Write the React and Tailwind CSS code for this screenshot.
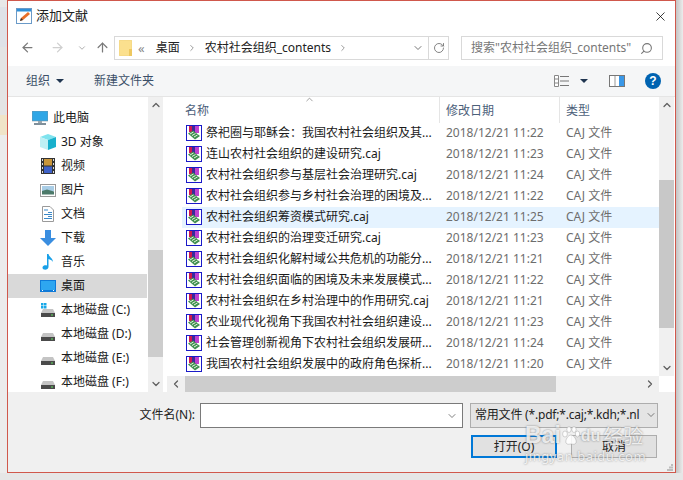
import { ChevronUp, ChevronDown, ChevronLeft, ChevronRight, ArrowLeft, ArrowRight, ArrowUp, RotateCw, Search, X } from "lucide-react";

const files = [
  ["祭祀圈与耶稣会：我国农村社会组织及其...", "2018/12/21 11:22"],
  ["连山农村社会组织的建设研究.caj", "2018/12/21 11:23"],
  ["农村社会组织参与基层社会治理研究.caj", "2018/12/21 11:24"],
  ["农村社会组织参与乡村社会治理的困境及...", "2018/12/21 11:22"],
  ["农村社会组织筹资模式研究.caj", "2018/12/21 11:25"],
  ["农村社会组织的治理变迁研究.caj", "2018/12/21 11:23"],
  ["农村社会组织化解村域公共危机的功能分...", "2018/12/21 11:21"],
  ["农村社会组织面临的困境及未来发展模式...", "2018/12/21 11:22"],
  ["农村社会组织在乡村治理中的作用研究.caj", "2018/12/21 11:21"],
  ["农业现代化视角下我国农村社会组织建设...", "2018/12/21 11:23"],
  ["社会管理创新视角下农村社会组织发展研...", "2018/12/21 11:24"],
  ["我国农村社会组织发展中的政府角色探析...", "2018/12/21 11:20"],
];

function CajIcon() {
  return (
    <svg width="16" height="16" viewBox="0 0 16 16" className="shrink-0">
      <rect x="0.5" y="0.5" width="15" height="15" fill="#fff" stroke="#1a1ac8" />
      <rect x="3" y="1" width="3" height="6" fill="#d01850" />
      <rect x="6" y="1" width="3" height="6" fill="#3a2a9a" />
      <rect x="9" y="1" width="4" height="7" fill="#c040d0" />
      <path d="M2 8.5 L7 5.5 L14 11 L9 14.5 Z" fill="#3f8f4f" />
      <path d="M4 9 L7.5 7 M6 10.5 L9.5 8.5 M8 12 L11.5 10" stroke="#e8f5e0" strokeWidth="1" />
    </svg>
  );
}

function PcIcon() {
  return (
    <svg width="16" height="15" viewBox="0 0 16 15">
      <rect x="0" y="0" width="16" height="10" fill="#2ea6e6" stroke="#7f8f9a" strokeWidth="0.6" />
      <rect x="6" y="10" width="4" height="2" fill="#9aa6ae" />
      <rect x="2" y="12" width="12" height="2" fill="#7f8f9a" />
    </svg>
  );
}

function CubeIcon() {
  return (
    <svg width="16" height="16" viewBox="0 0 16 16">
      <path d="M8 0 L16 3 L8 6 L0 3 Z" fill="#7fe3ee" />
      <path d="M0 3 L8 6 L8 16 L0 13 Z" fill="#bff0f4" />
      <path d="M16 3 L8 6 L8 16 L16 13 Z" fill="#18b0cc" />
    </svg>
  );
}

function VideoIcon() {
  return (
    <svg width="14" height="16" viewBox="0 0 14 16">
      <rect width="14" height="16" fill="#333" />
      <rect x="3" y="1" width="8" height="6.5" fill="#c9963a" />
      <rect x="3" y="8.5" width="8" height="6.5" fill="#3f62c8" />
      <path d="M1 1h1v2H1zM1 5h1v2H1zM1 9h1v2H1zM1 13h1v2H1zM12 1h1v2h-1zM12 5h1v2h-1zM12 9h1v2h-1zM12 13h1v2h-1z" fill="#ddd" />
    </svg>
  );
}

function PictureIcon() {
  return (
    <svg width="16" height="13" viewBox="0 0 16 13">
      <rect x="0.5" y="0.5" width="15" height="12" fill="#fff" stroke="#9a9a9a" />
      <rect x="2" y="2" width="12" height="5" fill="#a9cde6" />
      <path d="M2 7 L7 5.5 L14 7.5 V10.5 H2 Z" fill="#4c7a6a" />
    </svg>
  );
}

function DocIcon() {
  return (
    <svg width="12" height="16" viewBox="0 0 12 16">
      <path d="M0.5 0.5 H8 L11.5 4 V15.5 H0.5 Z" fill="#fff" stroke="#9a9a9a" />
      <path d="M2 4h4M6 6.5h4M2 8.5h8M6 10.5h4M2 12.5h8" stroke="#3a88c8" />
    </svg>
  );
}

function DownloadIcon() {
  return (
    <svg width="16" height="16" viewBox="0 0 16 16">
      <path d="M5 0 H11 V8 H16 L8 16 L0 8 H5 Z" fill="#3a8ee0" />
    </svg>
  );
}

function MusicIcon() {
  return (
    <svg width="12" height="16" viewBox="0 0 12 16">
      <path d="M5 0 H6.5 C7 3 11 4 11 8 C10 6 8 5.5 6.5 5 V13 C6.5 15 4 16 2 15.5 C0 15 0 12.5 2 11.5 C3 11 4 11 5 11.5 Z" fill="#18a0e8" />
    </svg>
  );
}

function DesktopIcon() {
  return (
    <svg width="16" height="12" viewBox="0 0 16 12">
      <rect width="16" height="12" fill="#0f7ad8" />
      <rect x="1" y="1" width="14" height="9" fill="#2ea6f0" />
      <path d="M2 10.5h1M13 10.5h1" stroke="#fff" />
    </svg>
  );
}

function DiskIcon({ win }) {
  return (
    <svg width="14" height="14" viewBox="0 0 14 14">
      {win && <path d="M0 0h2.5v2.5H0zM3 0h2.5v2.5H3zM0 3h2.5v2.5H0zM3 3h2.5v2.5H3z" fill="#18a8e8" />}
      <path d="M2 6 H12 L14 10 H0 Z" fill="#c4c4c4" />
      <rect y="10" width="14" height="4" fill="#4a4a4a" />
      <rect x="10" y="11.5" width="2" height="1" fill="#5fe05f" />
    </svg>
  );
}

const places = [
  { label: "3D 对象", icon: <CubeIcon /> },
  { label: "视频", icon: <VideoIcon /> },
  { label: "图片", icon: <PictureIcon /> },
  { label: "文档", icon: <DocIcon /> },
  { label: "下载", icon: <DownloadIcon /> },
  { label: "音乐", icon: <MusicIcon /> },
  { label: "桌面", icon: <DesktopIcon />, active: true },
  { label: "本地磁盘 (C:)", icon: <DiskIcon win /> },
  { label: "本地磁盘 (D:)", icon: <DiskIcon /> },
  { label: "本地磁盘 (E:)", icon: <DiskIcon /> },
  { label: "本地磁盘 (F:)", icon: <DiskIcon /> },
];

function Sidebar() {
  return (
    <div className="w-[140px] h-full overflow-hidden pt-[9px] bg-white">
      <div className="h-6 flex items-center pl-6 gap-[5px] text-[#1a1a1a]">
        <PcIcon />
        <span>此电脑</span>
      </div>
      {places.map((p) => (
        <div
          key={p.label}
          className={`h-6 flex items-center w-[139px] text-[#1a1a1a] ${p.active ? "bg-[#d9d9d9]" : ""}`}
        >
          <span className="w-[53px] pl-8 pr-[5px] flex justify-center shrink-0">{p.icon}</span>
          <span className="whitespace-nowrap">{p.label}</span>
        </div>
      ))}
    </div>
  );
}

function FileList() {
  return (
    <div className="w-[492px] h-[279px] overflow-hidden bg-white">
      <div className="h-[26px] flex text-[#4c607a] relative">
        <div className="w-[273px] pl-[18px] pt-[6px] border-r border-[#e5e5e5]">名称</div>
        <div className="w-[120px] pl-[6px] pt-[6px] border-r border-[#e5e5e5]">修改日期</div>
        <div className="pl-[6px] pt-[6px]">类型</div>
        <ChevronUp size={11} strokeWidth={1.5} className="absolute left-[137px] top-[-3px] text-[#777]" />
      </div>
      {files.map(([name, date], i) => (
        <div
          key={name}
          className={`h-[21px] ml-[15px] pb-[2px] flex items-center ${i === 4 ? "bg-[#e5f3ff]" : ""}`}
        >
          <span className="pl-1 pr-1 shrink-0"><CajIcon /></span>
          <span className="w-[240px] whitespace-nowrap text-[#1a1a1a] shrink-0">{name}</span>
          <span className="w-[120px] whitespace-nowrap text-[#6d6d6d] shrink-0">{date}</span>
          <span className="whitespace-nowrap text-[#6d6d6d]">CAJ 文件</span>
        </div>
      ))}
    </div>
  );
}

function Watermark() {
  return (
    <div className="absolute left-[525px] top-[423px] w-[122px] text-white/80 pointer-events-none [text-shadow:0_0_2px_rgba(90,90,90,0.75)]">
      <div className="flex items-center h-[25px] font-bold text-[23px] leading-none font-['Liberation_Sans',sans-serif]">
        <span>Bai</span>
        <svg width="18" height="20" viewBox="0 0 18 20" className="mx-px shrink-0" fill="#fff" fillOpacity="0.85" stroke="#8a8a8a" strokeOpacity="0.6" strokeWidth="0.6">
          <ellipse cx="3" cy="8" rx="2.4" ry="3" />
          <ellipse cx="7" cy="3.5" rx="2.2" ry="3" />
          <ellipse cx="12" cy="3.5" rx="2.2" ry="3" />
          <ellipse cx="15.5" cy="8" rx="2.2" ry="3" />
          <path d="M9 9 C12 9 15 14 14 17 C13 19 10 18 9 18 C8 18 5 19 4 17 C3 14 6 9 9 9 Z" />
        </svg>
        <span className="text-[16px]">du</span>
        <span className="ml-[3px] font-['Noto_Sans_CJK_SC',sans-serif] font-normal text-[20px] leading-none whitespace-nowrap">经验</span>
      </div>
      <div className="text-[13px] leading-4 tracking-[0.5px] whitespace-nowrap">jingyan.baidu.com</div>
    </div>
  );
}

export default function App() {
  return (
    <div className="relative w-[683px] h-[480px] overflow-hidden flex flex-col bg-[#e6e6e6] text-xs font-['Noto_Sans','Noto_Sans_CJK_SC',sans-serif]">
      <div className="flex h-[473px]">
        <div className="w-[7px] flex flex-col shrink-0">
          <div className="h-[7px] bg-[#e8e8e8]" />
          <div className="h-[40px] bg-[#dfe2e8]" />
          <div className="h-[68px] bg-[#e4e4e4]" />
          <div className="h-[20px] bg-[#f0e4c8]" />
          <div className="flex-1 bg-[#ececec]" />
        </div>
        <div className="w-[669px] h-full shrink-0 border border-[#d0584c] flex flex-col bg-white">
          {/* title bar */}
          <div className="h-[30px] shrink-0 flex items-center pl-2 pr-[7px] text-[13px] text-[#222]">
            <svg width="16" height="16" viewBox="0 0 16 16" className="shrink-0">
              <rect x="0.5" y="0.5" width="15" height="15" fill="#fff" stroke="#6a9ac8" />
              <rect x="1" y="1" width="14" height="2.5" fill="#2f8fd8" />
              <path d="M4 13 L5 10 L12 4 L14 6 L7 12 Z" fill="#e8702a" />
              <path d="M4 13 L5 10 L7 12 Z" fill="#333" />
            </svg>
            <span className="ml-1">添加文献</span>
            <X size={15} strokeWidth={1.2} className="ml-auto text-black" />
          </div>

          {/* nav bar */}
          <div className="h-[35px] shrink-0 flex items-start pt-[5px] pl-3 text-[#222]">
            <ArrowLeft size={15} strokeWidth={2} className="mt-1 text-[#7a7a7a]" />
            <ArrowRight size={15} strokeWidth={2} className="mt-1 ml-[15px] text-[#cfcfcf]" />
            <ChevronDown size={10} strokeWidth={2} className="mt-[7px] ml-[12px] text-[#a0a0a0]" />
            <ArrowUp size={15} strokeWidth={2} className="mt-1 ml-[8px] text-[#7a7a7a]" />
            <div className="ml-1 w-[335px] h-[24px] border border-[#d9d9d9] flex items-center pl-1">
              <svg width="13" height="16" viewBox="0 0 13 16" className="shrink-0">
                <rect x="0" y="0" width="13" height="16" rx="1" fill="#fbe08e" stroke="#e6c870" strokeWidth="0.5" />
                <rect x="10" y="9" width="3" height="7" fill="#eec860" />
              </svg>
              <span className="ml-[6px] text-[#888] text-[13px] leading-none">«</span>
              <span className="ml-[11px]">桌面</span>
              <ChevronRight size={10} strokeWidth={2} className="ml-[7px] text-[#888]" />
              <span className="ml-2 whitespace-nowrap">农村社会组织_contents</span>
              <ChevronRight size={10} strokeWidth={2} className="ml-[7px] text-[#888]" />
              <ChevronDown size={12} strokeWidth={1.8} className="ml-auto mr-[4px] text-[#666]" />
              <div className="w-[20px] h-full border-l border-[#d9d9d9] flex items-center justify-center">
                <RotateCw size={12} strokeWidth={1.8} className="text-[#777]" />
              </div>
            </div>
            <div className="ml-3 w-[202px] h-[24px] border border-[#d9d9d9] flex items-center pl-[9px] pr-[9px] text-[#777]">
              <span className="whitespace-nowrap">搜索"农村社会组织_contents"</span>
              <Search size={13} strokeWidth={2} className="ml-auto -scale-x-100 text-[#777]" />
            </div>
          </div>

          {/* toolbar */}
          <div className="h-[31px] shrink-0 flex items-center bg-[#f5f6f7] border-b border-[#e5e5e5] pl-[18px] pr-[14px] text-[#3b4f68]">
            <span>组织</span>
            <span className="ml-[6px] w-0 h-0 border-x-[4px] border-x-transparent border-t-[4px] border-t-[#1f3550]" />
            <span className="ml-[30px]">新建文件夹</span>
            <svg width="16" height="12" viewBox="0 0 16 12" className="ml-auto">
              <path d="M0.5 0.5h4v11h-4zM0.5 4h4M0.5 8h4" fill="#fff" stroke="#888" />
              <path d="M6 1.5h9M6 6h9M6 10.5h9" stroke="#777" />
            </svg>
            <span className="ml-[10px] w-0 h-0 border-x-[4px] border-x-transparent border-t-[4px] border-t-[#1f3550]" />
            <svg width="16" height="12" viewBox="0 0 16 12" className="ml-[21px]">
              <rect x="0.5" y="0.5" width="15" height="11" fill="#fff" stroke="#777" />
              <rect x="10" y="1" width="5" height="10" fill="#3a98e8" />
              <path d="M6 1v10" stroke="#999" />
            </svg>
            <span className="ml-[20px] w-4 h-4 rounded-full bg-[#0063b1] text-white font-bold text-[12px] leading-4 text-center font-['Liberation_Sans',sans-serif]">?</span>
          </div>

          {/* main area */}
          <div className="h-[295px] shrink-0 flex">
            <Sidebar />
            <div className="w-[15px] h-full flex flex-col items-center bg-[#f0f0f0]">
              <div className="h-[16px] flex items-center justify-center"><ChevronUp size={12} strokeWidth={2.5} className="text-[#606060]" /></div>
              <div className="mt-[137px] h-[107px] w-full bg-[#cdcdcd]" />
              <div className="mt-auto h-[17px] flex items-center justify-center"><ChevronDown size={12} strokeWidth={2.5} className="text-[#606060]" /></div>
            </div>
            <div className="w-[4px] bg-white" />
            <div className="w-[508px] flex flex-col">
              <div className="flex h-[279px]">
                <FileList />
                <div className="w-[15px] h-full flex flex-col items-center bg-[#f0f0f0]">
                  <div className="h-[16px] flex items-center justify-center"><ChevronUp size={12} strokeWidth={2.5} className="text-[#606060]" /></div>
                  <div className="mt-[67px] h-[148px] w-full bg-[#c8c8c8]" />
                  <div className="mt-auto h-[17px] flex items-center justify-center"><ChevronDown size={12} strokeWidth={2.5} className="text-[#606060]" /></div>
                </div>
              </div>
              <div className="flex h-[16px]">
                <div className="w-[492px] flex items-center bg-[#f0f0f0]">
                  <div className="w-[18px] flex justify-center"><ChevronLeft size={12} strokeWidth={2.5} className="text-[#606060]" /></div>
                  <div className="w-[371px] h-full bg-[#cdcdcd]" />
                  <div className="ml-auto w-[18px] flex justify-center"><ChevronRight size={12} strokeWidth={2.5} className="text-[#606060]" /></div>
                </div>
              </div>
            </div>
          </div>

          {/* bottom form */}
          <div className="flex-1 bg-[#f0f0f0] pt-[11px] relative text-[#222]">
            <div className="flex items-center h-[25px]">
              <span className="w-[187px] text-right whitespace-nowrap pb-[2px]">文件名(N):</span>
              <div className="ml-[5px] w-[263px] h-[25px] bg-white border border-[#7a7a7a] flex items-center justify-end pr-1">
                <ChevronDown size={12} strokeWidth={1.5} className="text-[#555]" />
              </div>
              <div className="ml-[7px] w-[188px] h-[25px] bg-[#e4e4e4] border border-[#adadad] flex items-center pl-1 pb-[2px] overflow-hidden">
                <span className="whitespace-nowrap w-[170px] overflow-hidden shrink-0 tracking-[-0.2px]">常用文件 (*.pdf;*.caj;*.kdh;*.nl</span>
                <ChevronDown size={12} strokeWidth={1.5} className="text-[#555] shrink-0" />
              </div>
            </div>
            <div className="flex mt-[7px] pl-[463px]">
              <div className="w-[86px] h-[23px] bg-[#e1e1e1] border-2 border-[#0078d7] flex items-center justify-center">打开(O)</div>
              <div className="ml-[14px] w-[86px] h-[23px] bg-[#e1e1e1] border border-[#adadad] flex items-center justify-center">取消</div>
            </div>
            {/* resize grip */}
            <svg width="8" height="8" viewBox="0 0 8 8" className="absolute right-[1px] bottom-[1px]">
              <path d="M5 1h2v2H5zM3 3.5h2v2H3zM5 3.5h2v2H5zM1 6h2v2H1zM3 6h2v2H3zM5 6h2v2H5z" fill="#bdbdbd" />
            </svg>
          </div>
        </div>
        <div className="w-[7px] shrink-0 bg-gradient-to-r from-[#c4c4c4] to-[#ececec]" />
      </div>
      <Watermark />
    </div>
  );
}
